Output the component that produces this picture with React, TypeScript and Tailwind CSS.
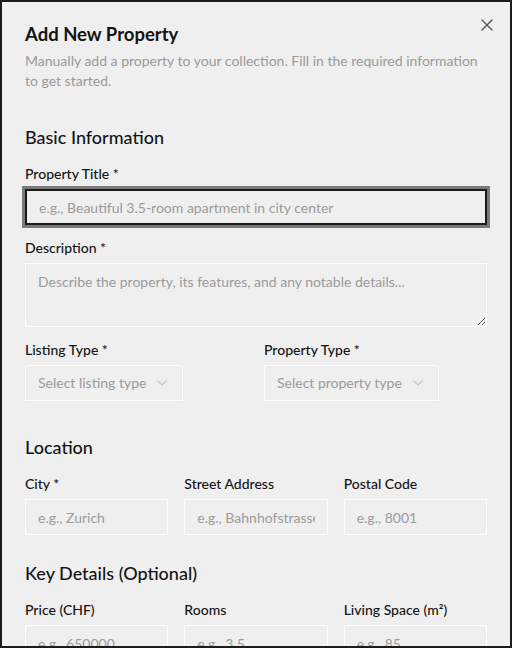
import { X, ChevronDown } from "lucide-react";

const FONT = { fontFamily: "Lato, 'Noto Sans', sans-serif" };

const inputBase =
  "h-9 w-full border border-white bg-transparent px-3 text-sm text-[#1a1a1a] placeholder:text-[#9b9b9b] outline-none";

const Label = ({ children }: { children: React.ReactNode }) => (
  <label className="block text-sm leading-none font-medium text-[#141414]">{children}</label>
);

const Field = ({ label, placeholder }: { label: string; placeholder: string }) => (
  <div className="flex flex-col gap-2 min-w-0">
    <Label>{label}</Label>
    <input className={inputBase} placeholder={placeholder} />
  </div>
);

const SelectBox = ({ label, placeholder }: { label: string; placeholder: string }) => (
  <div className="flex flex-col gap-2">
    <Label>{label}</Label>
    <button
      type="button"
      className="flex h-9 w-fit items-center gap-2 border border-white px-3 text-sm text-[#9b9b9b]"
    >
      <span>{placeholder}</span>
      <ChevronDown size={16} className="text-[#c4c4c4]" />
    </button>
  </div>
);

export default function App() {
  return (
    <div
      style={FONT}
      className="relative h-[648px] w-[512px] overflow-hidden border-2 border-[#1c1c1c] bg-[#efefef]"
    >
      <button type="button" className="absolute top-[13px] right-[13px] text-[#555]">
        <X size={20} strokeWidth={1.6} />
      </button>

      <div className="px-[23px] pt-[18px]">
        {/* Header */}
        <div>
          <h2 className="text-[18.5px] leading-7 font-bold text-[#141414]">Add New Property</h2>
          <p className="mt-[3px] text-sm leading-5 text-[#9a9a9a]">
            Manually add a property to your collection. Fill in the required information to get
            started.
          </p>
        </div>

        {/* Basic Information */}
        <section className="mt-8 flex flex-col gap-4">
          <h3 className="text-lg leading-7 font-medium text-[#141414]">Basic Information</h3>
          <div className="flex flex-col gap-2">
            <Label>Property Title *</Label>
            <input
              className="h-9 w-full border-2 border-[#1a1a1a] bg-transparent px-3 text-sm placeholder:text-[#9b9b9b] outline-none ring-[3px] ring-[#7a7a7a]"
              placeholder="e.g., Beautiful 3.5-room apartment in city center"
            />
          </div>
          <div className="flex flex-col gap-2">
            <Label>Description *</Label>
            <textarea
              className="h-16 w-full border border-white bg-transparent px-3 py-2 text-sm placeholder:text-[#9b9b9b] outline-none"
              placeholder="Describe the property, its features, and any notable details..."
            />
          </div>
          <div className="grid grid-cols-2 gap-4">
            <SelectBox label="Listing Type *" placeholder="Select listing type" />
            <SelectBox label="Property Type *" placeholder="Select property type" />
          </div>
        </section>

        {/* Location */}
        <section className="mt-8 flex flex-col gap-4">
          <h3 className="text-lg leading-7 font-medium text-[#141414]">Location</h3>
          <div className="grid grid-cols-3 gap-4">
            <Field label="City *" placeholder="e.g., Zurich" />
            <Field label="Street Address" placeholder="e.g., Bahnhofstrasse 1" />
            <Field label="Postal Code" placeholder="e.g., 8001" />
          </div>
        </section>

        {/* Key Details */}
        <section className="mt-6 flex flex-col gap-4">
          <h3 className="text-lg leading-7 font-medium text-[#141414]">Key Details (Optional)</h3>
          <div className="grid grid-cols-3 gap-4">
            <Field label="Price (CHF)" placeholder="e.g., 650000" />
            <Field label="Rooms" placeholder="e.g., 3.5" />
            <Field label="Living Space (m²)" placeholder="e.g., 85" />
          </div>
        </section>
      </div>
    </div>
  );
}
